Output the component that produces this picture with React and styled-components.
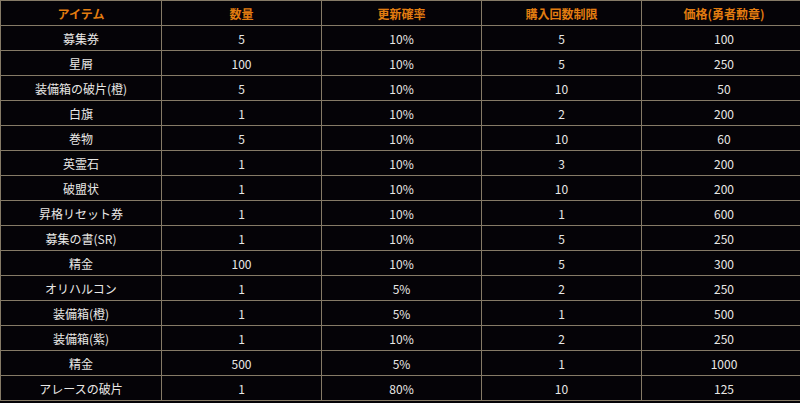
import React from 'react';
import styled, { createGlobalStyle } from 'styled-components';

const GlobalStyle = createGlobalStyle`
    html, body {
        margin: 0;
        padding: 0;
        background: #050307;
        overflow: hidden;
    }
`;

const columns = ['アイテム', '数量', '更新確率', '購入回数制限', '価格(勇者勲章)'];

const rows = [
    ['募集券', '5', '10%', '5', '100'],
    ['星屑', '100', '10%', '5', '250'],
    ['装備箱の破片(橙)', '5', '10%', '10', '50'],
    ['白旗', '1', '10%', '2', '200'],
    ['巻物', '5', '10%', '10', '60'],
    ['英霊石', '1', '10%', '3', '200'],
    ['破盟状', '1', '10%', '10', '200'],
    ['昇格リセット券', '1', '10%', '1', '600'],
    ['募集の書(SR)', '1', '10%', '5', '250'],
    ['精金', '100', '10%', '5', '300'],
    ['オリハルコン', '1', '5%', '2', '250'],
    ['装備箱(橙)', '1', '5%', '1', '500'],
    ['装備箱(紫)', '1', '10%', '2', '250'],
    ['精金', '500', '5%', '1', '1000'],
    ['アレースの破片', '1', '80%', '10', '125'],
];

const ItemTable = () => (
    <Table>
        {columns.map((c) => (
            <HeadCell key={c}>{c}</HeadCell>
        ))}
        {rows.map((row, i) =>
            row.map((v, j) => <Cell key={`${i}-${j}`}>{v}</Cell>)
        )}
    </Table>
);

const Table = styled.div`
    display: grid;
    grid-template-columns: 161px 160px 160px 160px 165px;
    grid-auto-rows: 25px;
    width: 807px;
    border-top: 1px solid #857a66;
    border-left: 1px solid #857a66;
    background: #050307;
`;

const Cell = styled.div`
    display: flex;
    align-items: center;
    justify-content: center;
    border-right: 1px solid #857a66;
    border-bottom: 1px solid #857a66;
    color: #e9e8e6;
    font-family: "Noto Sans CJK JP", "Noto Sans", sans-serif;
    font-size: 12px;
    white-space: nowrap;
`;

const HeadCell = styled(Cell)`
    color: #e27c10;
    font-weight: bold;
`;

export default function App() {
    return (
        <>
            <GlobalStyle />
            <ItemTable />
        </>
    );
}
